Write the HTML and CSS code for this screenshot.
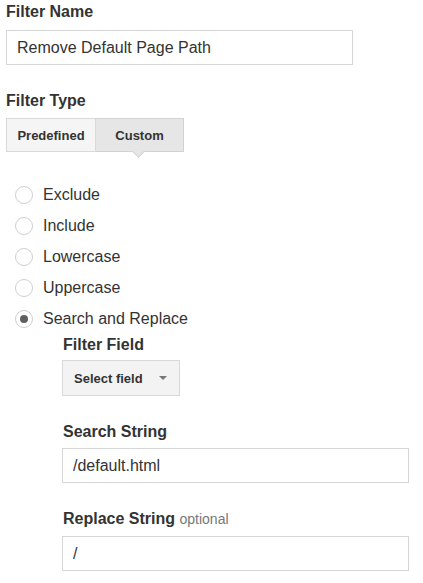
FILE: index.html
```html
<!DOCTYPE html>
<html lang="en">
<head>
    <meta charset="UTF-8">
    <meta name="viewport" content="width=device-width, initial-scale=1.0">
    <title>Edit Filter</title>
    <link rel="stylesheet" href="styles.css">
</head>
<body>
    <div class="filter-form">
        <section class="field">
            <h2 class="field-label">Filter Name</h2>
            <input type="text" class="text-input" value="Remove Default Page Path">
        </section>

        <section class="field field-type">
            <h2 class="field-label">Filter Type</h2>
            <div class="toggle">
                <button class="toggle-btn">Predefined</button>
                <button class="toggle-btn active">Custom</button>
            </div>

            <ul class="radio-list">
                <li class="radio-item"><span class="radio"></span>Exclude</li>
                <li class="radio-item"><span class="radio"></span>Include</li>
                <li class="radio-item"><span class="radio"></span>Lowercase</li>
                <li class="radio-item"><span class="radio"></span>Uppercase</li>
                <li class="radio-item"><span class="radio checked"></span>Search and Replace</li>
            </ul>

            <div class="sub-fields">
                <div class="sub-field">
                    <h2 class="field-label">Filter Field</h2>
                    <div class="select-box">
                        <span>Select field</span>
                        <span class="caret"></span>
                    </div>
                </div>
                <div class="sub-field">
                    <h2 class="field-label">Search String</h2>
                    <input type="text" class="text-input" value="/default.html">
                </div>
                <div class="sub-field">
                    <h2 class="field-label">Replace String <span class="optional">optional</span></h2>
                    <input type="text" class="text-input" value="/">
                </div>
            </div>
        </section>
    </div>
</body>
</html>
```

FILE: styles.css
```css
body {
    margin: 0;
    padding: 1px 6px 0;
    font-family: "Liberation Sans", Arial, sans-serif;
    color: #333;
    background: #fff;
}

.field-label {
    margin: 0 0 7px;
    font-size: 16px;
    line-height: 22px;
    font-weight: bold;
    color: #333;
}

.optional {
    font-size: 14px;
    font-weight: normal;
    color: #777;
}

.text-input {
    display: block;
    box-sizing: border-box;
    width: 347px;
    height: 35px;
    margin: 0;
    padding: 0 10px;
    border: 1px solid #d6d6d6;
    font-family: "Liberation Sans", Arial, sans-serif;
    font-size: 16px;
    color: #333;
    outline: none;
}

.field-type {
    margin-top: 25px;
}

.field-type > .field-label {
    margin-bottom: 6px;
}

.toggle {
    display: flex;
}

.toggle-btn {
    position: relative;
    box-sizing: border-box;
    height: 34px;
    margin: 0;
    border: 1px solid #d9d9d9;
    background: #f5f5f5;
    font-family: "Liberation Sans", Arial, sans-serif;
    font-size: 13px;
    font-weight: bold;
    color: #333;
    cursor: pointer;
}

.toggle-btn:first-child {
    width: 90px;
}

.toggle-btn.active {
    width: 88px;
    border-left: none;
    background: #e6e6e6;
    border-color: #d2d2d2;
}

.toggle-btn.active::after {
    content: "";
    position: absolute;
    left: 38px;
    bottom: -5px;
    width: 8px;
    height: 8px;
    background: #e6e6e6;
    border-right: 1px solid #d2d2d2;
    border-bottom: 1px solid #d2d2d2;
    transform: rotate(45deg);
}

.radio-list {
    list-style: none;
    margin: 27px 0 0;
    padding: 0 0 0 9px;
}

.radio-item {
    display: flex;
    align-items: center;
    gap: 10px;
    height: 31px;
    font-size: 16px;
    color: #333;
}

.radio {
    display: flex;
    align-items: center;
    justify-content: center;
    box-sizing: border-box;
    width: 18px;
    height: 18px;
    border: 1px solid #cfcfcf;
    border-radius: 50%;
    background: #fff;
}

.radio.checked::after {
    content: "";
    width: 8px;
    height: 8px;
    border-radius: 50%;
    background: #5f5f5f;
}

.sub-fields {
    margin-left: 56px;
}

.sub-fields .field-label {
    margin-left: 1px;
    margin-bottom: 5px;
}

.sub-field + .sub-field {
    margin-top: 25px;
}

.sub-field:first-child .field-label {
    margin-bottom: 4px;
}

.sub-field:last-child .field-label {
    margin-bottom: 6px;
}

.select-box {
    display: flex;
    align-items: center;
    justify-content: space-between;
    box-sizing: border-box;
    width: 118px;
    height: 36px;
    padding: 0 12px 0 11px;
    border: 1px solid #d9d9d9;
    background: #f3f3f3;
    font-size: 13px;
    font-weight: bold;
    color: #333;
}

.caret {
    width: 0;
    height: 0;
    border-left: 4px solid transparent;
    border-right: 4px solid transparent;
    border-top: 4px solid #777;
}
```
